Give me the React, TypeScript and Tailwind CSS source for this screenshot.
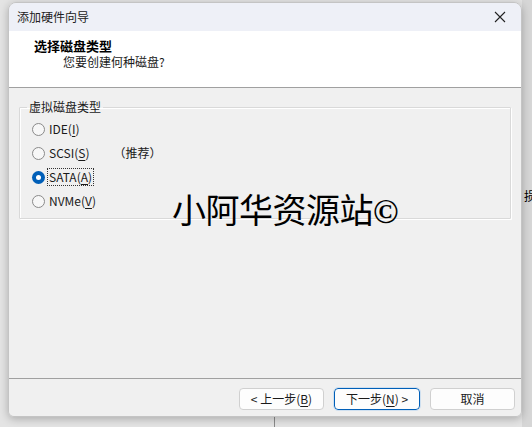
import React from 'react'

const font = { fontFamily: '"Noto Sans CJK SC", "Noto Sans", sans-serif' }

const OPTIONS = [
  { key: 'ide', pre: 'IDE(', hot: 'I', post: ')', note: '' },
  { key: 'scsi', pre: 'SCSI(', hot: 'S', post: ')', note: '（推荐）' },
  { key: 'sata', pre: 'SATA(', hot: 'A', post: ')', note: '' },
  { key: 'nvme', pre: 'NVMe(', hot: 'V', post: ')', note: '' },
]

function Radio({ checked }: { checked: boolean }) {
  if (checked)
    return (
      <span className="w-[13px] h-[13px] rounded-full bg-[#005fb8] flex items-center justify-center shrink-0">
        <span className="w-[5px] h-[5px] rounded-full bg-white" />
      </span>
    )
  return <span className="w-[13px] h-[13px] rounded-full border border-[#8a8a8a] bg-[#f7f7f7] shrink-0" />
}

export default function App() {
  const selected = 'sata'
  return (
    <div className="w-[532px] h-[427px] bg-[#e4e4e4] relative overflow-hidden text-[12px] text-[#1a1a1a]" style={font}>
      {/* desktop behind the dialog */}
      <div className="absolute left-[522px] top-0 w-[10px] h-full bg-[#d6d6d6]" />
      <div className="absolute left-[524px] top-[187px] text-[12px] text-black">损</div>
      <div className="absolute left-[274px] top-[416px] w-px h-[11px] bg-[#8a8a8a]" />

      <div className="absolute left-[8px] top-[2px] w-[514px] h-[415px] rounded-t-[8px] rounded-b-[6px] overflow-hidden flex flex-col border border-[#c4c4c4] shadow-[0_2px_8px_rgba(0,0,0,0.25)]">
        {/* title bar */}
        <div className="h-[28px] bg-[#eef0f7] flex items-center justify-between pl-[8px] pr-[15px] shrink-0">
          <span className="text-[12px] text-[#222]">添加硬件向导</span>
          <svg width="12" height="12" viewBox="0 0 12 12" stroke="#222" strokeWidth="1.1" fill="none">
            <path d="M1 1 L11 11 M11 1 L1 11" />
          </svg>
        </div>

        {/* header */}
        <div className="h-[57px] bg-white border-b border-[#a0a0a0] shrink-0 pl-[25px] pt-[6px] flex flex-col">
          <span className="text-[13px] font-bold leading-[17px] text-black">选择磁盘类型</span>
          <span className="pl-[29px] mt-[-1px] leading-[17px] text-[12px]">您要创建何种磁盘?</span>
        </div>

        {/* body */}
        <div className="flex-1 bg-[#f0f0f0] px-[10px] pt-[12px] relative">
          <fieldset className="border border-[#d9d9d9] h-[119px] px-[12px] pt-[3px] rounded-[1px] shadow-[inset_1px_1px_0_#fff,1px_1px_0_#fff]">
            <legend className="px-[2px] ml-[-5px] text-[12px] leading-[14px]">虚拟磁盘类型</legend>
            <div className="flex flex-col">
              {OPTIONS.map(o => (
                <div key={o.key} className="h-[24px] flex items-center">
                  <Radio checked={o.key === selected} />
                  <span className={`ml-[3px] px-[1px] leading-[16px] ${o.key === selected ? 'outline outline-1 outline-dotted outline-[#333]' : ''}`}>
                    {o.pre}
                    <span className="underline underline-offset-2">{o.hot}</span>
                    {o.post}
                  </span>
                  {o.note && <span className="ml-[23px]">{o.note}</span>}
                </div>
              ))}
            </div>
          </fieldset>

          {/* watermark */}
          <div className="absolute left-[163px] top-[104px] text-[34px] leading-[40px] text-black tracking-[-0.5px]" style={{ fontFamily: '"Liberation Serif", "Noto Sans CJK SC", serif' }}>
            小阿华资源站<span className="font-bold">©</span>
          </div>
        </div>

        {/* footer */}
        <div className="h-[38px] bg-[#f0f0f0] border-t border-[#a0a0a0] shrink-0 flex justify-end items-start pt-[9px] pr-[6px] gap-[10px]">
          <button className="w-[85px] h-[22px] bg-[#fdfdfd] border border-[#d0d0d0] rounded-[4px] text-[12px] leading-none">
            &lt; 上一步(<span className="underline underline-offset-2">B</span>)
          </button>
          <button className="w-[86px] h-[22px] bg-[#fdfdfd] border border-[#005fb8] rounded-[4px] text-[12px] leading-none outline outline-1 outline-[#cfe0f0]">
            下一步(<span className="underline underline-offset-2">N</span>) &gt;
          </button>
          <button className="w-[85px] h-[22px] bg-[#fdfdfd] border border-[#d0d0d0] rounded-[4px] text-[12px] leading-none">
            取消
          </button>
        </div>
      </div>
    </div>
  )
}
